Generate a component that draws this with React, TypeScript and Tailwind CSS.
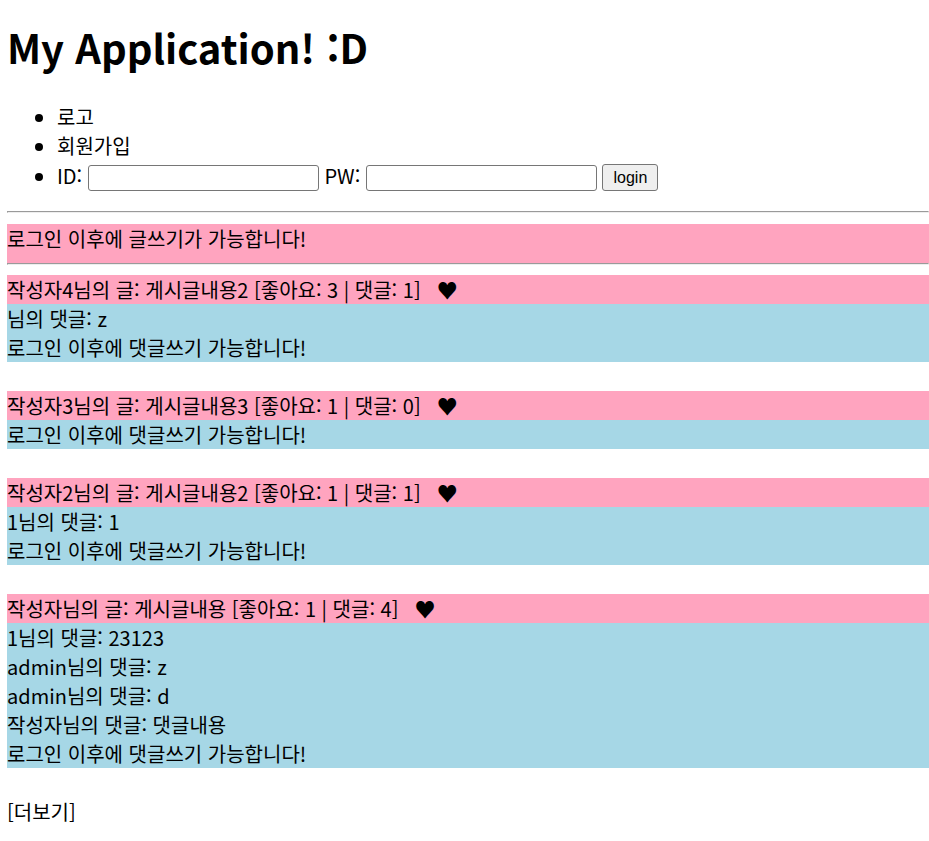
type Post = { head: string; comments: string[] };

const posts: Post[] = [
  { head: "작성자4님의 글: 게시글내용2 [좋아요: 3 | 댓글: 1]", comments: ["님의 댓글: z"] },
  { head: "작성자3님의 글: 게시글내용3 [좋아요: 1 | 댓글: 0]", comments: [] },
  { head: "작성자2님의 글: 게시글내용2 [좋아요: 1 | 댓글: 1]", comments: ["1님의 댓글: 1"] },
  {
    head: "작성자님의 글: 게시글내용 [좋아요: 1 | 댓글: 4]",
    comments: ["1님의 댓글: 23123", "admin님의 댓글: z", "admin님의 댓글: d", "작성자님의 댓글: 댓글내용"],
  },
];

const field = "w-[231px] h-[26px] px-[2px] text-[16px] border border-[#767676] rounded-[3px] bg-white";
const rule = "h-[2px] border border-t-[#9a9a9a] border-l-[#9a9a9a] border-b-[#eeeeee] border-r-[#eeeeee]";

export default function App() {
  return (
    <div
      lang="ko"
      className="[font-family:'Noto_Sans_CJK_KR','Liberation_Sans',sans-serif] pl-[7px] text-[20px] leading-[29px] text-black bg-white min-h-[841px]"
    >
      <h1 className="pt-[18px] text-[40px] leading-[58px] font-bold">My Application! :D</h1>
      <ul className="mt-[26px] pl-[50px] list-disc">
        <li>로고</li>
        <li>회원가입</li>
        <li className="h-[32px] pt-[1px]">
          ID: <input className={field} /> PW: <input className={field} />{" "}
          <button className="-translate-y-px h-[27px] w-[56px] border border-[#767676] rounded-[3px] bg-[#efefef] text-[16px] leading-[25px] [font-family:'Liberation_Sans',sans-serif]">
            login
          </button>
        </li>
      </ul>
      <hr className={`mt-[19px] ${rule}`} />
      <div className="mt-[11px] h-[39px] bg-[#ffa4bf]">로그인 이후에 글쓰기가 가능합니다!</div>
      <hr className={rule} />
      <div className="mt-[10px] flex flex-col gap-[29px]">
        {posts.map((p, i) => (
          <div key={i}>
            <div className="bg-[#ffa4bf] flex h-[29px]">
              <span>{p.head}</span>
              <span className="ml-[16px] text-[21px] font-bold">♥</span>
            </div>
            <div className="bg-[#a6d7e6]">
              {p.comments.map((c, j) => (
                <div key={j}>{c}</div>
              ))}
              <div>로그인 이후에 댓글쓰기 가능합니다!</div>
            </div>
          </div>
        ))}
      </div>
      <div className="mt-[29px]">[더보기]</div>
    </div>
  );
}
